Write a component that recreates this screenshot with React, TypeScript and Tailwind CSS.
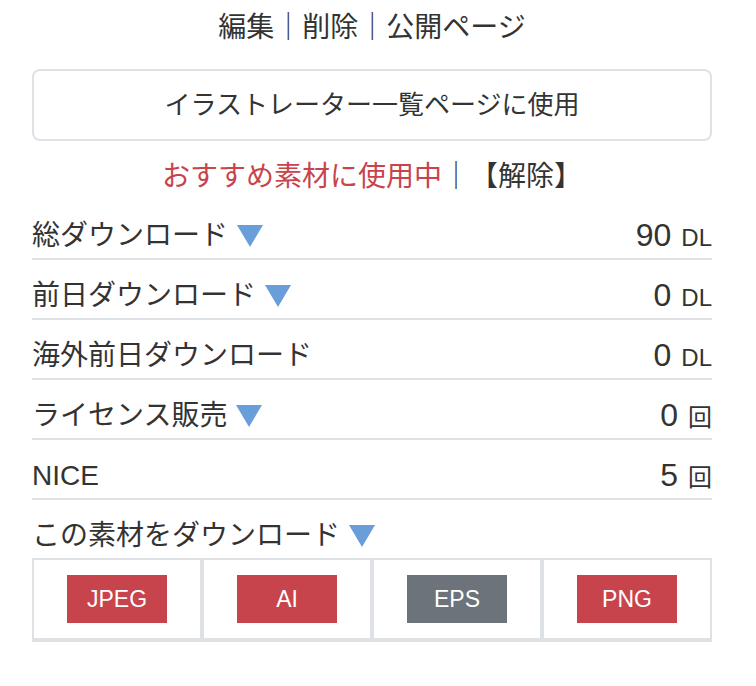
import React from "react";

const Tri = () => (
  <svg width="26" height="22" viewBox="0 0 26 22" className="ml-[9px] inline-block shrink-0">
    <polygon points="0,0 26,0 13,22" fill="#6a9edb" />
  </svg>
);

type Row = { label: string; tri: boolean; value: string; unit: string };

const rows: Row[] = [
  { label: "総ダウンロード", tri: true, value: "90", unit: "DL" },
  { label: "前日ダウンロード", tri: true, value: "0", unit: "DL" },
  { label: "海外前日ダウンロード", tri: false, value: "0", unit: "DL" },
  { label: "ライセンス販売", tri: true, value: "0", unit: "回" },
  { label: "NICE", tri: false, value: "5", unit: "回" },
];

const formats = [
  { name: "JPEG", bg: "bg-[#c8444c]" },
  { name: "AI", bg: "bg-[#c8444c]" },
  { name: "EPS", bg: "bg-[#6c737b]" },
  { name: "PNG", bg: "bg-[#c8444c]" },
];

export default function App() {
  return (
    <div
      className="min-h-[686px] w-[756px] bg-white text-[#333]"
      style={{ fontFamily: '"Liberation Sans", "Noto Sans CJK JP", sans-serif' }}
    >
      <div className="ml-8 w-[680px] pt-2">
        <div className="text-center text-[28px] leading-[40px]">編集｜削除｜公開ページ</div>
        <div className="mt-[21px] flex h-[72px] items-center justify-center rounded-lg border-2 border-[#dee2e6] text-[26px]">
          イラストレーター一覧ページに使用
        </div>
        <div className="mt-4 text-center text-[28px] leading-[40px]">
          <span className="text-[#c8434b]">おすすめ素材に使用中</span>｜【解除】
        </div>
        <div className="mt-[3px]">
          {rows.map((r) => (
            <div
              key={r.label}
              className="flex h-[60px] items-center justify-between border-b-2 border-[#dee2e6] pt-[14px] leading-[40px]"
            >
              <div className="flex items-center text-[28px]">
                <span>{r.label}</span>
                {r.tri && <Tri />}
              </div>
              <div className="flex items-baseline">
                <span className="text-[32px]">{r.value}</span>
                <span className="ml-[10px] text-[24px]">{r.unit}</span>
              </div>
            </div>
          ))}
        </div>
        <div className="flex h-[58px] items-center pt-[14px] text-[28px] leading-[40px]">
          <span>この素材をダウンロード</span>
          <Tri />
        </div>
        <div className="grid grid-cols-4 border-b-2 border-[#dee2e6]">
          {formats.map((f) => (
            <div
              key={f.name}
              className="flex items-center justify-center border-2 border-[#dee2e6] py-[15px]"
            >
              <div
                className={`flex h-[48px] w-[100px] items-center justify-center text-[23px] text-white ${f.bg}`}
              >
                {f.name}
              </div>
            </div>
          ))}
        </div>
      </div>
    </div>
  );
}
